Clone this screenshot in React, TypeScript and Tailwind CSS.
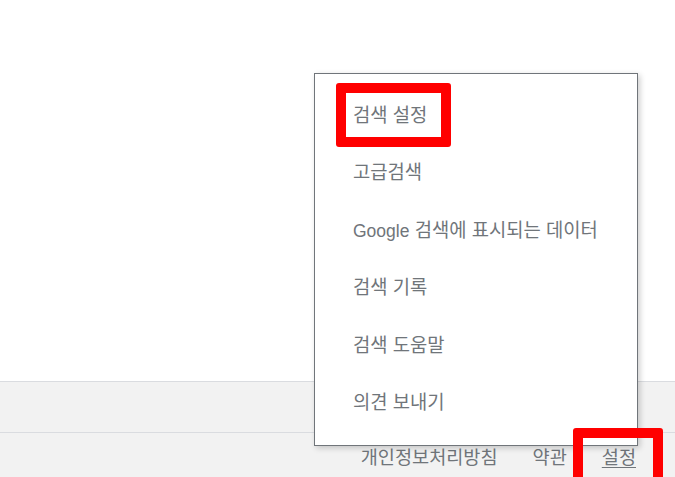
const menuItems = [
  "검색 설정",
  "고급검색",
  "Google 검색에 표시되는 데이터",
  "검색 기록",
  "검색 도움말",
  "의견 보내기",
];

const font = { fontFamily: '"Liberation Sans", "Noto Sans CJK KR", sans-serif' };

function Label({ text }: { text: string }) {
  if (!text.startsWith("Google")) return <span>{text}</span>;
  return (
    <span>
      <span className="text-[17.5px]">Google</span>
      {text.slice(6)}
    </span>
  );
}

export default function App() {
  return (
    <div
      className="relative h-[477px] w-[675px] overflow-hidden bg-white flex flex-col text-[#70757a]"
      style={font}
    >
      <div className="flex-1" />
      <footer className="bg-[#f2f2f2]">
        <div className="h-[51px] border-t border-[#dadce0]" />
        <div className="h-[45px] border-t border-[#dadce0] flex justify-end items-center gap-[35px] pr-[39px] pt-[5px] text-[18.6px]">
          <a>개인정보처리방침</a>
          <a>약관</a>
          <a className="underline underline-offset-[3px]">설정</a>
        </div>
      </footer>

      {/* settings popup */}
      <div className="absolute left-[314px] top-[73px] w-[324px] h-[373px] bg-white border border-[#70757a] shadow-[2px_2px_6px_rgba(0,0,0,0.2)] py-[13px]">
        {menuItems.map((item) => (
          <div key={item} className="h-[57.5px] flex items-center pl-[38px] text-[18.8px]">
            <Label text={item} />
          </div>
        ))}
      </div>

      {/* highlight marks */}
      <div className="absolute left-[336px] top-[83px] w-[115px] h-[64px] border-[10px] border-[#ff0000] rounded-[3px]" />
      <div className="absolute left-[573px] top-[428px] w-[90px] h-[70px] border-[10px] border-[#ff0000] rounded-[3px]" />
    </div>
  );
}
